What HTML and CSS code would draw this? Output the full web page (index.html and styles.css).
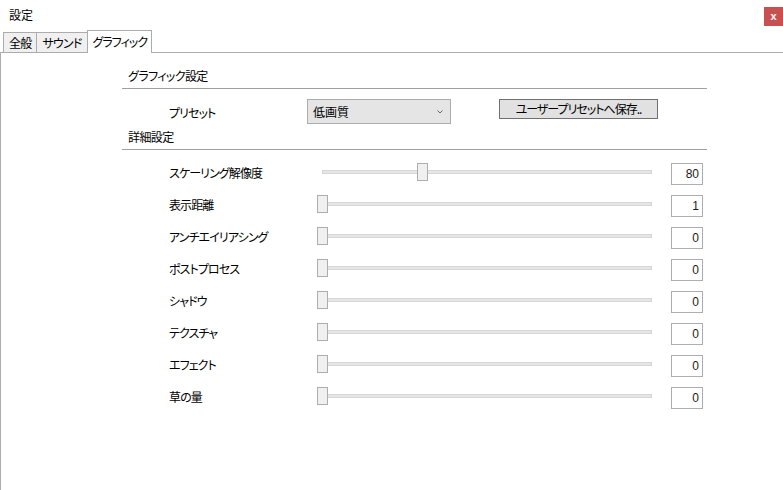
FILE: index.html
```html
<!DOCTYPE html>
<html lang="ja">
<head>
<meta charset="utf-8">
<title>設定</title>
<link rel="stylesheet" href="styles.css">
</head>
<body>
<div class="window">
  <header class="titlebar">
    <span class="title">設定</span>
    <button class="close">x</button>
  </header>
  <nav class="tabs">
    <div class="tab">全般</div>
    <div class="tab">サウンド</div>
    <div class="tab active">グラフィック</div>
  </nav>
  <main class="panel">
    <section class="group">
      <h2 class="group-title">グラフィック設定</h2>
      <div class="preset-row">
        <span class="label preset-label">プリセット</span>
        <div class="select">
          <span>低画質</span>
          <svg class="chev" width="6" height="4" viewBox="0 0 6 4"><path d="M0.5 0.5 L3 3 L5.5 0.5" fill="none" stroke="#666" stroke-width="1"/></svg>
        </div>
        <button class="save">ユーザープリセットへ保存..</button>
      </div>
      <h2 class="group-title sub">詳細設定</h2>
      <div class="rows">
        <div class="row">
          <span class="label">スケーリング解像度</span>
          <div class="slider"><div class="track"></div><div class="thumb" style="left:100px"></div></div>
          <div class="num">80</div>
        </div>
        <div class="row">
          <span class="label">表示距離</span>
          <div class="slider"><div class="track"></div><div class="thumb" style="left:0px"></div></div>
          <div class="num">1</div>
        </div>
        <div class="row">
          <span class="label">アンチエイリアシング</span>
          <div class="slider"><div class="track"></div><div class="thumb" style="left:0px"></div></div>
          <div class="num">0</div>
        </div>
        <div class="row">
          <span class="label">ポストプロセス</span>
          <div class="slider"><div class="track"></div><div class="thumb" style="left:0px"></div></div>
          <div class="num">0</div>
        </div>
        <div class="row">
          <span class="label">シャドウ</span>
          <div class="slider"><div class="track"></div><div class="thumb" style="left:0px"></div></div>
          <div class="num">0</div>
        </div>
        <div class="row">
          <span class="label">テクスチャ</span>
          <div class="slider"><div class="track"></div><div class="thumb" style="left:0px"></div></div>
          <div class="num">0</div>
        </div>
        <div class="row">
          <span class="label">エフェクト</span>
          <div class="slider"><div class="track"></div><div class="thumb" style="left:0px"></div></div>
          <div class="num">0</div>
        </div>
        <div class="row">
          <span class="label">草の量</span>
          <div class="slider"><div class="track"></div><div class="thumb" style="left:0px"></div></div>
          <div class="num">0</div>
        </div>
      </div>
    </section>
  </main>
</div>
</body>
</html>
```
FILE: styles.css
```css
* { box-sizing: border-box; }

html, body {
  margin: 0;
  padding: 0;
  background: #fff;
}

body {
  font-family: "Noto Sans CJK JP", "Noto Sans", sans-serif;
  font-size: 12px;
  color: #000;
  font-feature-settings: "palt" 1;
}

.window {
  width: 783px;
  height: 490px;
  display: flex;
  flex-direction: column;
  overflow: hidden;
}

/* title bar */
.titlebar {
  height: 30px;
  display: flex;
  align-items: flex-start;
  justify-content: space-between;
}

.title {
  margin: 7px 0 0 9px;
  line-height: 16px;
}

.close {
  margin-top: 7px;
  width: 19px;
  height: 19px;
  border: 0;
  padding: 0;
  background: #c75050;
  color: #fff;
  font: bold 11px/17px "Liberation Sans", Arial, sans-serif;
}

/* tab strip */
.tabs {
  height: 22px;
  display: flex;
  align-items: flex-end;
  padding-left: 3px;
  position: relative;
  z-index: 1;
}

.tab {
  height: 20px;
  padding: 0 5px 0 5px;
  line-height: 19px;
  letter-spacing: -0.8px;
  background: #f0f0f0;
  border: 1px solid #acacac;
  border-bottom: 0;
  margin-right: -1px;
}

.tab.active {
  height: 23px;
  margin-bottom: -1px;
  background: #fff;
  padding: 0 4px 0 5px;
  line-height: 21px;
  letter-spacing: -1px;
}

/* content panel */
.panel {
  flex: 1;
  border-top: 1px solid #acacac;
  border-left: 1px solid #acacac;
  padding: 13px 0 0 121px;
}

.group {
  width: 585px;
}

.group-title {
  margin: 0;
  font-size: 12px;
  font-weight: normal;
  line-height: 20px;
  letter-spacing: -0.6px;
  padding: 0 0 2px 6px;
  border-bottom: 1px solid #a0a0a0;
}

.group-title.sub {
  margin-top: 3px;
}

.preset-row {
  margin-top: 10px;
  height: 25px;
  display: flex;
  align-items: flex-start;
}

.label {
  padding-left: 47px;
  width: 195px;
  white-space: nowrap;
  letter-spacing: -0.9px;
}

.preset-label {
  width: 185px;
  line-height: 25px;
  margin-top: 1px;
}

.select {
  width: 144px;
  height: 25px;
  border: 1px solid #acacac;
  background: #e5e5e5;
  display: flex;
  justify-content: space-between;
  align-items: center;
  padding: 0 7px 0 5px;
}

.chev {
  display: block;
}

.save {
  margin-left: 48px;
  width: 159px;
  height: 20px;
  border: 1px solid #707070;
  background: #e1e1e1;
  font: inherit;
  font-feature-settings: "palt" 1;
  letter-spacing: -1px;
  padding: 0;
  line-height: 18px;
  color: #000;
}

/* detail rows */
.rows {
  margin-top: 6px;
  display: flex;
  flex-direction: column;
}

.row {
  height: 32px;
  display: flex;
  align-items: center;
}

.slider {
  position: relative;
  width: 340px;
  height: 18px;
  display: flex;
  align-items: center;
}

.track {
  margin-left: 5px;
  width: 330px;
  height: 4px;
  background: #e7e7e7;
  border: 1px solid #d6d6d6;
}

.thumb {
  position: absolute;
  top: 0;
  width: 11px;
  height: 18px;
  background: #f0f0f0;
  border: 1px solid #adadad;
}

.num {
  margin-left: 14px;
  width: 32px;
  height: 22px;
  border: 1px solid #adadad;
  text-align: right;
  padding-right: 3px;
  font: 12px/20px "Liberation Sans", Arial, sans-serif;
  color: #1a1a1a;
  margin-top: 3px;
}
```
